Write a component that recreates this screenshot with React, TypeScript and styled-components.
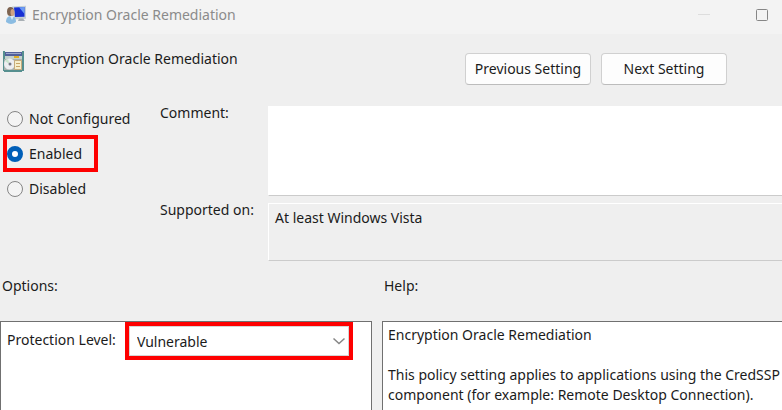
import React, { useState } from "react";
import styled, { createGlobalStyle, css } from "styled-components";

const GlobalStyle = createGlobalStyle`
  * { box-sizing: border-box; }
  body {
    margin: 0;
    background: #efefef;
    color: #1b1b1b;
    font: 14px/20px "Noto Sans", "Open Sans", sans-serif;
  }
  button, input, select, textarea { font: inherit; color: inherit; margin: 0; }
`;

const highlight = css`
  outline: 4px solid #fe0000;
`;

const Window = styled.div`
  display: flex;
  flex-direction: column;
  min-height: 100vh;
  overflow: hidden;
`;

const TitleBar = styled.header`
  display: flex;
  align-items: center;
  height: 34px;
  padding: 0 12px 4px 6px;
  gap: 6px;
  background: #f3f3f3;
  color: #8b8b8b;
`;

const WindowTitle = styled.h1`
  flex: 1;
  margin: 0;
  font-size: 14px;
  font-weight: 400;
`;

const CaptionButton = styled.button`
  display: flex;
  align-items: center;
  justify-content: center;
  width: 16px;
  height: 16px;
  margin-left: 36px;
  padding: 0;
  border: 0;
  background: none;
`;

const PolicyHeader = styled.section`
  display: flex;
  align-items: flex-start;
  gap: 10px;
  padding: 15px 55px 0 3px;
`;

const PolicyIcon = styled.span`
  display: flex;
  padding-top: 2px;
`;

const PolicyName = styled.h2`
  flex: 1;
  margin: 0;
  font-size: 14px;
  font-weight: 400;
`;

const NavButton = styled.button`
  width: 126px;
  height: 32px;
  margin-top: 4px;
  padding: 0 0 1px;
  border: 1px solid #d0d0d0;
  border-bottom-color: #bcbcbc;
  border-radius: 4px;
  background: #fdfdfd;
  white-space: nowrap;
`;

const Settings = styled.section`
  display: grid;
  grid-template-columns: 153px minmax(0, 1fr);
  padding: 18px 0 0 7px;
`;

const States = styled.fieldset`
  display: flex;
  flex-direction: column;
  align-items: flex-start;
  gap: 6px;
  min-width: 0;
  margin: 0;
  padding: 1px 0 0;
  border: 0;
`;

const StateLabel = styled.label<{ $marked?: boolean }>`
  display: flex;
  align-items: center;
  gap: 6px;
  height: 29px;
  padding-right: 12px;
  ${(p) => p.$marked && highlight}
`;

const Radio = styled.input`
  appearance: none;
  width: 16px;
  height: 16px;
  border: 1px solid #858585;
  border-radius: 50%;
  background: #f4f4f4;
  &:checked {
    border: 5px solid #005fb8;
    background: #fff;
  }
`;

const Fields = styled.div`
  display: grid;
  grid-template-columns: 108px minmax(0, 1fr);
  row-gap: 4px;
`;

const FieldLabel = styled.label`
  line-height: 20px;
`;

const TextArea = styled.textarea<{ $tall?: boolean }>`
  display: block;
  width: 100%;
  height: ${(p) => (p.$tall ? 90 : 58)}px;
  margin-top: 3px;
  padding: 4px 6px;
  border: 0 solid #fff;
  border-width: ${(p) => (p.$tall ? "0" : "1px")} 0 1px 1px;
  border-bottom-color: #cbcbcb;
  border-radius: 0;
  background: ${(p) => (p.$tall ? "#fff" : "#efefef")};
  resize: none;
  outline: 0;
`;

const Panes = styled.main`
  flex: 1;
  display: grid;
  grid-template-columns: minmax(0, 372fr) minmax(0, 400fr);
  grid-template-rows: auto 1fr;
  column-gap: 10px;
  row-gap: 25px;
  padding-top: 15px;
`;

const PaneTitle = styled.h3`
  margin: 0;
  padding-left: 2px;
  font-size: 14px;
  font-weight: 400;
`;

const Pane = styled.section`
  border: 1px solid #707070;
  border-bottom: 0;
  background: #fff;
`;

const OptionsPane = styled(Pane)`
  display: flex;
  align-items: flex-start;
  gap: 13px;
  padding: 4px 22px 0 6px;
`;

const OptionLabel = styled.label`
  padding-top: 4px;
  white-space: nowrap;
`;

const SelectBox = styled.div`
  display: grid;
  align-items: center;
  flex: 1;
  ${highlight}
`;

const Select = styled.select`
  grid-area: 1 / 1;
  appearance: none;
  width: 100%;
  height: 30px;
  padding: 1px 28px 0 7px;
  border: 1px solid #d5d5d5;
  border-radius: 0;
  background: #fff;
`;

const Chevron = styled.svg`
  grid-area: 1 / 1;
  justify-self: end;
  margin-right: 3px;
  pointer-events: none;
`;

const HelpPane = styled(Pane)`
  border-right: 0;
  padding: 3px 0 0 5px;
`;

const HelpText = styled.p`
  margin: 0 0 20px;
`;

const UserMonitorIcon = () => (
  <svg width="20" height="20" viewBox="0 0 20 20" aria-hidden="true">
    <path d="M6 1.500 20 .8v13L8 14.500z" fill="#c5cfd5" />
    <path d="M8 2.500 18.500 2v9.700L9 12z" fill="#1730d4" />
    <path d="M13 2.300 18.500 2v7z" fill="#6b9bf4" />
    <path d="M13 13.500h4l2 2.500h-7z" fill="#a9b0b5" />
    <ellipse cx="4.500" cy="6.500" rx="3.500" ry="4.500" fill="#7d6350" />
    <ellipse cx="6.500" cy="7.500" rx="2" ry="3.500" fill="#d0a382" />
    <path d="M0 17c0-4 2-6 5-6s5 2 5 6q-5 4-10 0z" fill="#8bbce2" />
    <path d="m4 11 2 4 2-4z" fill="#d8eaf7" />
  </svg>
);

const PolicyDocumentIcon = () => (
  <svg width="21" height="21" viewBox="0 0 21 21" aria-hidden="true">
    <path d="M0 0h2v1h17V0h2v20h-2v1H1v-1H0z" fill="#568f8f" />
    <path d="M2 1h17v4H2z" fill="#53619a" />
    <path d="M3 2h15v1H3z" fill="#9ca8cd" />
    <path d="M2 5h17v3H2z" fill="#c5d2cc" />
    <path d="M11 5h5v2h-5z" fill="#dfad26" />
    <path d="M1 8h18v11H1z" fill="#a8b0ad" />
    <circle cx="6.500" cy="13" r="5.500" fill="#ededf0" />
    <path d="M6.500 13 2 10l3-2z" fill="#c8e3cb" />
    <circle cx="7" cy="13" r="1.500" fill="#777985" />
    <path d="M11.500 9.500h7v9h-7z" fill="#f7eecb" stroke="#c6ab7c" />
    <path d="M13 12.500h4M13 15.500h4" stroke="#c9a468" />
  </svg>
);

const states = ["Not Configured", "Enabled", "Disabled"];

export default function App() {
  const [state, setState] = useState("Enabled");
  const [comment, setComment] = useState("");

  return (
    <Window>
      <GlobalStyle />
      <TitleBar>
        <UserMonitorIcon />
        <WindowTitle>Encryption Oracle Remediation</WindowTitle>
        <CaptionButton aria-label="Minimize" disabled>
          <svg width="12" height="12" aria-hidden="true">
            <path d="M0 5.500h12" stroke="#dddddd" />
          </svg>
        </CaptionButton>
        <CaptionButton aria-label="Maximize">
          <svg width="12" height="12" aria-hidden="true">
            <rect x=".5" y=".5" width="11" height="11" rx="1" fill="none" stroke="#868686" />
          </svg>
        </CaptionButton>
      </TitleBar>

      <PolicyHeader>
        <PolicyIcon>
          <PolicyDocumentIcon />
        </PolicyIcon>
        <PolicyName>Encryption Oracle Remediation</PolicyName>
        <NavButton>Previous Setting</NavButton>
        <NavButton>Next Setting</NavButton>
      </PolicyHeader>

      <Settings>
        <States aria-label="Policy state">
          {states.map((name) => (
            <StateLabel key={name} $marked={name === "Enabled"}>
              <Radio
                type="radio"
                name="state"
                checked={state === name}
                onChange={() => setState(name)}
              />
              {name}
            </StateLabel>
          ))}
        </States>
        <Fields>
          <FieldLabel htmlFor="comment">Comment:</FieldLabel>
          <TextArea
            id="comment"
            $tall
            value={comment}
            onChange={(e) => setComment(e.target.value)}
          />
          <FieldLabel htmlFor="supported">Supported on:</FieldLabel>
          <TextArea id="supported" readOnly value="At least Windows Vista" />
        </Fields>
      </Settings>

      <Panes>
        <PaneTitle>Options:</PaneTitle>
        <PaneTitle>Help:</PaneTitle>
        <OptionsPane>
          <OptionLabel htmlFor="level">Protection Level:</OptionLabel>
          <SelectBox>
            <Select id="level" defaultValue="Vulnerable">
              <option>Force Updated Clients</option>
              <option>Mitigated</option>
              <option>Vulnerable</option>
            </Select>
            <Chevron width="14" height="8" viewBox="0 0 14 8" aria-hidden="true">
              <path d="m1.500 1.500 5.500 5 5.500-5" fill="none" stroke="#868686" strokeWidth="1.500" />
            </Chevron>
          </SelectBox>
        </OptionsPane>
        <HelpPane>
          <HelpText>Encryption Oracle Remediation</HelpText>
          <HelpText>
            This policy setting applies to applications using the CredSSP component (for example:
            Remote Desktop Connection).
          </HelpText>
        </HelpPane>
      </Panes>
    </Window>
  );
}
